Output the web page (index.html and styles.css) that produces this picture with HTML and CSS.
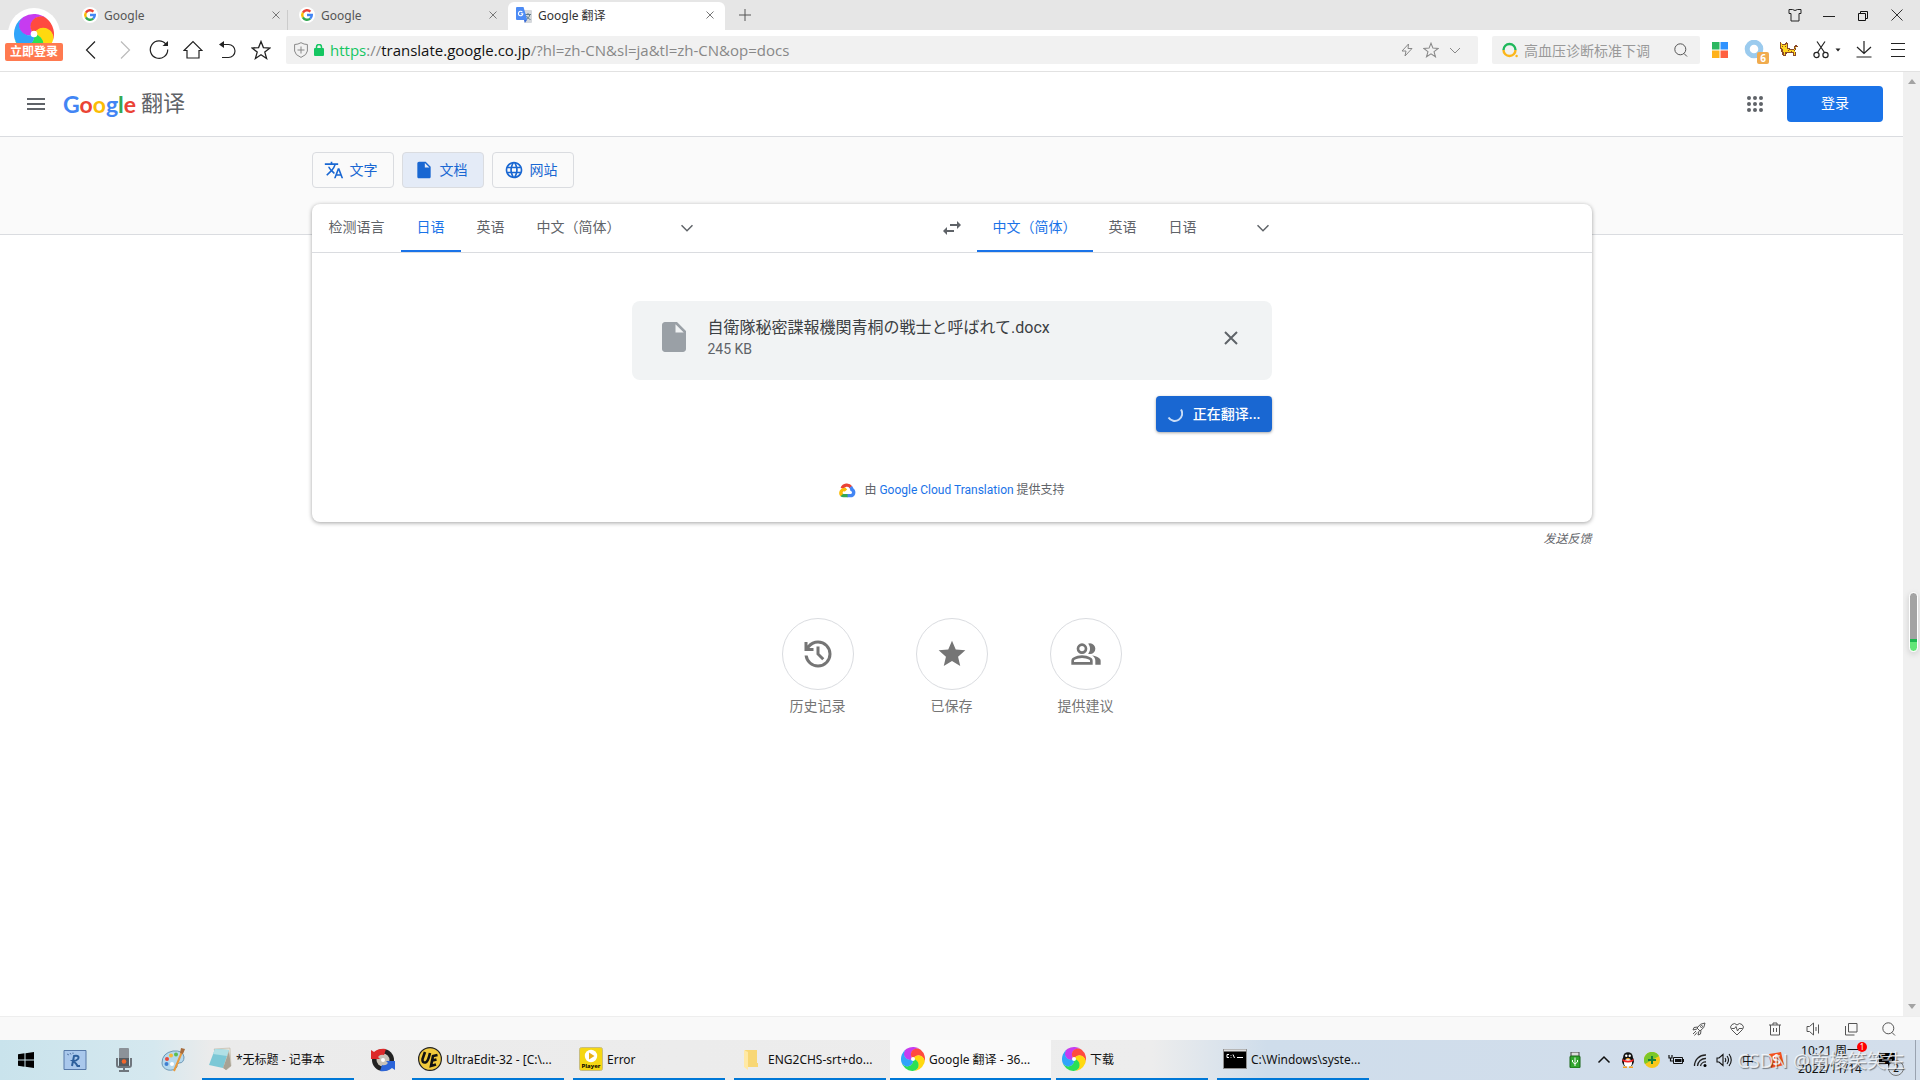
FILE: index.html
```html
<!DOCTYPE html>
<html lang="zh-CN">
  <head>
    <meta charset="UTF-8" />
    <meta name="viewport" content="width=device-width, initial-scale=1.0" />
    <title>Google 翻译</title>
    <link rel="stylesheet" href="styles.css">
  </head>
  <body>
    <!-- Shared icons -->
    <svg class="sprite" aria-hidden="true">
      <symbol id="google-g" viewBox="0 0 16 16">
        <circle cx="8" cy="8" r="8" fill="#fff" />
        <g fill="none" stroke-width="2.4">
          <path d="M3.9 5.6A4.8 4.8 0 0 1 11.4 4.6" stroke="#ea4335" />
          <path d="M3.9 10.4A4.8 4.8 0 0 1 3.9 5.6" stroke="#fbbc05" />
          <path d="M11.2 11.6A4.8 4.8 0 0 1 3.9 10.4" stroke="#34a853" />
          <path d="M8 8H12.8A4.8 4.8 0 0 1 11.2 11.6" stroke="#4285f4" />
        </g>
      </symbol>
      <symbol id="pinwheel" viewBox="0 0 24 24">
        <g transform="rotate(-32 12 12)">
          <path d="M12 12A6 6 0 0 1 12 0A12 12 0 0 1 23.4 8.3A6 6 0 0 0 12 12" fill="#c63cf0" />
          <path d="M12 12A6 6 0 0 1 12 0A12 12 0 0 1 23.4 8.3A6 6 0 0 0 12 12" fill="#ff4a40" transform="rotate(72 12 12)" />
          <path d="M12 12A6 6 0 0 1 12 0A12 12 0 0 1 23.4 8.3A6 6 0 0 0 12 12" fill="#ffd90f" transform="rotate(144 12 12)" />
          <path d="M12 12A6 6 0 0 1 12 0A12 12 0 0 1 23.4 8.3A6 6 0 0 0 12 12" fill="#2be055" transform="rotate(216 12 12)" />
          <path d="M12 12A6 6 0 0 1 12 0A12 12 0 0 1 23.4 8.3A6 6 0 0 0 12 12" fill="#30a4fa" transform="rotate(288 12 12)" />
        </g>
        <circle cx="12" cy="12" r="2" fill="#fff" />
      </symbol>
      <symbol id="close" viewBox="0 0 8 8">
        <path d="M.5 .5L7.5 7.5M7.5 .5L.5 7.5" fill="none" stroke="currentColor" />
      </symbol>
      <symbol id="file" viewBox="0 0 24 24">
        <path d="M6 2c-1.1 0-2 .9-2 2v16c0 1.1.9 2 2 2h12c1.1 0 2-.9 2-2V8l-6-6H6zm7 7V3.5L18.5 9H13z" />
      </symbol>
      <symbol id="chevron" viewBox="0 0 24 24">
        <path d="M5.4 7.6L4 9l8 8 8-8-1.4-1.4L12 14.2z" />
      </symbol>
      <symbol id="star-line" viewBox="0 0 20 20">
        <path d="M10 1.5L12.4 7.6L19 8L13.8 12.1L15.6 18.5L10 14.8L4.4 18.5L6.2 12.1L1 8L7.6 7.6Z" fill="none" stroke="currentColor" stroke-width="1.3" />
      </symbol>
      <symbol id="search" viewBox="0 0 14 14">
        <circle cx="6.3" cy="6.3" r="5.5" fill="none" stroke="currentColor" />
        <path d="M10 10.5L13 13.5" stroke="currentColor" />
      </symbol>
    </svg>

    <!-- Browser tabs -->
    <header class="browser">
      <div class="tab-strip">
        <div class="tab divided">
          <svg class="icon-16"><use href="#google-g" /></svg>
          <span class="tab-title">Google</span>
          <button class="tab-close" aria-label="关闭"><svg class="icon-8"><use href="#close" /></svg></button>
        </div>
        <div class="tab">
          <svg class="icon-16"><use href="#google-g" /></svg>
          <span class="tab-title">Google</span>
          <button class="tab-close" aria-label="关闭"><svg class="icon-8"><use href="#close" /></svg></button>
        </div>
        <div class="tab active">
          <svg class="icon-16" viewBox="0 0 16 16">
            <path d="M6 3H15A1 1 0 0 1 16 4V15A1 1 0 0 1 15 16H9Z" fill="#d5d8dc" />
            <path d="M9 7.5H15M12 6V7.5M10 12.5C12 11.5 13.4 10 13.8 7.5M10.5 9C11.5 11 13 12 14.5 12.5" stroke="#607d8b" fill="none" />
            <path d="M8 13H11L8.8 16Z" fill="#3367d6" />
            <path d="M1 0H7.5L11.3 13H1A1 1 0 0 1 0 12V1A1 1 0 0 1 1 0Z" fill="#4c8bf5" />
            <path d="M6.4 5.2A2.2 2.2 0 1 0 6.8 6.8H4.8" stroke="#fff" stroke-width="1.1" fill="none" />
          </svg>
          <span class="tab-title">Google 翻译</span>
          <button class="tab-close" aria-label="关闭"><svg class="icon-8"><use href="#close" /></svg></button>
        </div>
        <button class="tab-new" aria-label="新标签页">
          <svg class="icon-12" viewBox="0 0 12 12"><path d="M6 0V12M0 6H12" stroke="#555" /></svg>
        </button>
        <div class="window-controls">
          <button aria-label="皮肤"><svg class="icon-14" viewBox="0 0 14 14"><path d="M1 1.5H4.5Q7 3.5 9.5 1.5H13V5.5H11V13H3V5.5H1Z" fill="none" stroke="#222" /></svg></button>
          <button aria-label="最小化"><svg class="icon-14" viewBox="0 0 14 14"><path d="M1 8.5H13" stroke="#222" /></svg></button>
          <button aria-label="还原"><svg class="icon-14" viewBox="0 0 14 14"><path d="M2.5 5.5H9.5V12.5H2.5ZM4.5 5V3.5H11.5V10.5H10" fill="none" stroke="#111" /></svg></button>
          <button aria-label="关闭窗口"><svg class="icon-14" viewBox="0 0 14 14"><path d="M1.5 1.5L12.5 12.5M12.5 1.5L1.5 12.5" stroke="#333" /></svg></button>
        </div>
      </div>

      <button class="account">
        <span class="account-logo"><svg class="icon-40"><use href="#pinwheel" /></svg></span>
        <span class="account-label">立即登录</span>
      </button>

      <!-- Address bar -->
      <div class="toolbar">
        <button class="tool" aria-label="后退"><svg class="icon-20" viewBox="0 0 20 20"><path d="M14 1.5L5.5 10L14 18.5" /></svg></button>
        <button class="tool disabled" aria-label="前进"><svg class="icon-20" viewBox="0 0 20 20"><path d="M6 1.5L14.5 10L6 18.5" /></svg></button>
        <button class="tool" aria-label="刷新"><svg class="icon-20" viewBox="0 0 20 20"><path d="M17 4.5A8.7 8.7 0 1 0 18.7 9.5" /><path d="M19 1V6H13.5Z" fill="#222" stroke="none" /></svg></button>
        <button class="tool" aria-label="主页"><svg class="icon-20" viewBox="0 0 20 20"><path d="M1 10.5L10 1.5L19 10.5H16V18H4V10.5Z" /></svg></button>
        <button class="tool" aria-label="恢复"><svg class="icon-20" viewBox="0 0 20 20"><path d="M4 4.5H11.5A6.5 6.5 0 0 1 11.5 17.5H5" /><path d="M2 4.5L7 1V8Z" fill="#222" stroke="none" /></svg></button>
        <button class="tool" aria-label="收藏"><svg class="icon-20"><use href="#star-line" /></svg></button>
        <div class="address">
          <svg class="shield" viewBox="0 0 14 16"><path d="M7 .7Q10 2.5 13.4 2.5V9Q13 13 7 15.4Q1 13 .6 9V2.5Q4 2.5 7 .7ZM7 4.5V11.5M3.5 8H10.5" fill="none" stroke="#888" /></svg>
          <svg class="lock" viewBox="0 0 10 12"><rect y="4" width="10" height="8" rx="1" fill="#15c662" /><path d="M2.5 5V3A2.5 2.5 0 0 1 7.5 3V5" fill="none" stroke="#15c662" stroke-width="1.5" /></svg>
          <div class="url" role="textbox" aria-label="网址" contenteditable="true" spellcheck="false"><span class="url-scheme">https</span>://<span class="url-host">translate.google.co.jp</span>/?hl=zh-CN&amp;sl=ja&amp;tl=zh-CN&amp;op=docs</div>
          <button aria-label="极速模式"><svg class="icon-14" viewBox="0 0 14 14"><path d="M8.5 1L2 8H6L5 13L12 5.5H8Z" fill="none" stroke="#888" /></svg></button>
          <button aria-label="收藏网页"><svg class="icon-16"><use href="#star-line" /></svg></button>
          <button aria-label="历史"><svg class="icon-12" viewBox="0 0 12 12"><path d="M1 4L6 9L11 4" fill="none" stroke="#888" /></svg></button>
        </div>
        <form class="quick-search">
          <svg class="icon-16" viewBox="0 0 16 16"><path d="M1.5 8A6 6 0 0 1 13.5 8" fill="none" stroke="#1fb85b" stroke-width="2.4" /><path d="M13.5 8A6 6 0 0 1 1.5 8" fill="none" stroke="#fbb61a" stroke-width="2.4" /><circle cx="14.6" cy="14" r="1.2" fill="#fbb61a" /></svg>
          <input type="text" aria-label="搜索" placeholder="高血压诊断标准下调" />
          <button type="submit" aria-label="搜索"><svg class="icon-14"><use href="#search" /></svg></button>
        </form>
        <button class="tool colored" aria-label="应用"><svg class="icon-16" viewBox="0 0 16 16"><path d="M0 0H7.5V7.5H0Z" fill="#2cb760" /><path d="M8.5 0H16V7.5H8.5Z" fill="#2f93ff" /><path d="M0 8.5H7.5V16H0Z" fill="#ffb21a" /><path d="M8.5 8.5H16V16H8.5Z" fill="#ff6040" /></svg></button>
        <button class="tool" aria-label="扩展">
          <svg class="icon-20" viewBox="0 0 20 20"><circle cx="10" cy="9" r="6.8" stroke="#9bcbee" stroke-width="5" /></svg>
          <span class="tool-badge">6</span>
        </button>
        <button class="tool colored" aria-label="猎豹"><svg class="icon-20" viewBox="0 0 20 20"><path d="M2 2H3V3H4V4H7V3H8V2H9V3H10V8H12V9H16V6H17V5H19V6H20V7H18V10H17V12H18V16H15V13H9V14H8V16H5V15H4V12H3V9H2Z" fill="#8a4a2a" /><path d="M3 3V8H4V9H5V12H6V15H7V12H16V15H17V11H16V10H11V9H9V4H8V5H4V3ZM17 7V9H16V10H17V8H18V7Z" fill="#ffd51f" /><path d="M4 6H5V7H4ZM7 6H8V7H7ZM10 10H11V11H10ZM13 11H14V12H13Z" fill="#8a4a2a" /></svg></button>
        <button class="tool wide" aria-label="截图">
          <svg class="icon-20" viewBox="0 0 20 20"><circle cx="5.5" cy="15" r="2.6" /><circle cx="14.5" cy="15" r="2.6" /><path d="M6.5 12.5L14 1.5M13.5 12.5L6 1.5" /></svg>
          <svg class="caret" viewBox="0 0 6 4"><path d="M.5 .5H5.5L3 3.5Z" fill="#222" stroke="none" /></svg>
        </button>
        <button class="tool" aria-label="下载"><svg class="icon-20" viewBox="0 0 20 20"><path d="M10 1V13.5M3 7L10 13.5L17 7M2.5 17H17.5" /></svg></button>
        <button class="tool" aria-label="菜单"><svg class="icon-20" viewBox="0 0 20 20"><path d="M3 3.5H17M3 9.5H17M3 16.5H17" /></svg></button>
      </div>
    </header>

    <div class="viewport">
      <main class="page">
        <div class="topbar">
          <button class="menu" aria-label="主菜单"><svg class="icon-24" viewBox="0 0 24 24"><path d="M3 18h18v-2H3zM3 13h18v-2H3zM3 8h18V6H3z" /></svg></button>
          <a class="brand" href="#">
            <span class="logo"><span class="blue">G</span><span class="red">o</span><span class="yellow">o</span><span class="blue">g</span><span class="green">l</span><span class="red">e</span></span>
            <span class="brand-name">翻译</span>
          </a>
          <button class="apps" aria-label="Google 应用">
            <svg class="icon-24" viewBox="0 0 24 24">
              <circle cx="6" cy="6" r="2" /><circle cx="12" cy="6" r="2" /><circle cx="18" cy="6" r="2" />
              <circle cx="6" cy="12" r="2" /><circle cx="12" cy="12" r="2" /><circle cx="18" cy="12" r="2" />
              <circle cx="6" cy="18" r="2" /><circle cx="12" cy="18" r="2" /><circle cx="18" cy="18" r="2" />
            </svg>
          </button>
          <button class="sign-in">登录</button>
        </div>

        <div class="band">
          <nav class="modes">
            <button class="mode">
              <svg class="icon-20" viewBox="0 0 24 24"><path d="M12.87 15.07l-2.54-2.51.03-.03A17.52 17.52 0 0014.07 6H17V4h-7V2H8v2H1v1.99h11.17C11.5 7.92 10.44 9.75 9 11.35 8.07 10.32 7.3 9.19 6.69 8h-2c.73 1.63 1.73 3.17 2.98 4.56l-5.09 5.02L4 19l5-5 3.11 3.11.76-2.04zM18.5 10h-2L12 22h2l1.12-3h4.75L21 22h2l-4.5-12zm-2.62 7l1.62-4.33L19.12 17h-3.24z" /></svg>
              文字
            </button>
            <button class="mode selected"><svg class="icon-20"><use href="#file" /></svg>文档</button>
            <button class="mode">
              <svg class="icon-20" viewBox="0 0 24 24"><path d="M11.99 2C6.47 2 2 6.48 2 12s4.47 10 9.99 10C17.52 22 22 17.52 22 12S17.52 2 11.99 2zm6.93 6h-2.95a15.65 15.65 0 00-1.38-3.56A8.03 8.03 0 0118.92 8zM12 4.04c.83 1.2 1.48 2.53 1.91 3.96h-3.82c.43-1.43 1.08-2.76 1.91-3.96zM4.26 14C4.1 13.36 4 12.69 4 12s.1-1.36.26-2h3.38c-.08.66-.14 1.32-.14 2s.06 1.34.14 2H4.26zm.82 2h2.95c.32 1.25.78 2.45 1.38 3.56A7.987 7.987 0 015.08 16zm2.95-8H5.08a7.987 7.987 0 014.33-3.56A15.65 15.65 0 008.03 8zM12 19.96c-.83-1.2-1.48-2.53-1.91-3.96h3.82c-.43 1.43-1.08 2.76-1.91 3.96zM14.34 14H9.66c-.09-.66-.16-1.32-.16-2s.07-1.35.16-2h4.68c.09.65.16 1.32.16 2s-.07 1.34-.16 2zm.25 5.56c.6-1.11 1.06-2.31 1.38-3.56h2.95a8.03 8.03 0 01-4.33 3.56zM16.36 14c.08-.66.14-1.32.14-2s-.06-1.34-.14-2h3.38c.16.64.26 1.31.26 2s-.1 1.36-.26 2h-3.38z" /></svg>
              网站
            </button>
          </nav>
        </div>

        <div class="content">
          <section class="card">
            <div class="languages">
              <div class="lang-group">
                <button class="lang">检测语言</button>
                <button class="lang current">日语</button>
                <button class="lang">英语</button>
                <button class="lang">中文（简体）</button>
                <button class="lang-more" aria-label="更多源语言"><svg class="icon-18"><use href="#chevron" /></svg></button>
              </div>
              <button class="swap" aria-label="交换语言"><svg class="icon-24" viewBox="0 0 24 24"><path d="M7 11L3 15l4 4v-3H14v-2H7v-3zM21 9l-4-4v3H10v2h7v3L21 9z" /></svg></button>
              <div class="lang-group">
                <button class="lang current">中文（简体）</button>
                <button class="lang">英语</button>
                <button class="lang">日语</button>
                <button class="lang-more" aria-label="更多目标语言"><svg class="icon-18"><use href="#chevron" /></svg></button>
              </div>
            </div>

            <div class="upload">
              <div class="file">
                <svg class="icon-36"><use href="#file" /></svg>
                <div class="file-info">
                  <div class="file-name" lang="ja">自衛隊秘密諜報機関青桐の戦士と呼ばれて.docx</div>
                  <div class="file-size">245 KB</div>
                </div>
                <button class="file-remove" aria-label="移除文件"><svg class="icon-14" viewBox="0 0 14 14"><path d="M1 1L13 13M13 1L1 13" stroke="currentColor" stroke-width="2" /></svg></button>
              </div>
              <button class="translate">
                <svg class="icon-16" viewBox="0 0 16 16"><path d="M14 3.5A7 7 0 0 1 1.5 11.5" fill="none" stroke="#c9dcf6" stroke-width="2" /></svg>
                正在翻译...
              </button>
              <div class="powered">
                <svg class="icon-18" viewBox="0 0 16 16" fill="none" stroke-width="3">
                  <path d="M3.7 6.5A4.5 4.5 0 0 1 11.5 5.5" stroke="#ea4335" />
                  <path d="M11.3 5.3Q12.3 6.5 12.3 7.5A3 3 0 0 1 12 13H8" stroke="#4285f4" />
                  <path d="M8.5 13H5Q3.8 13 3 12.2" stroke="#34a853" />
                  <path d="M3.3 12.6A3.2 3.2 0 0 1 6 7.4L7 8.5" stroke="#fbbc05" />
                </svg>
                <span>由 <a href="#">Google Cloud Translation</a> 提供支持</span>
              </div>
            </div>
          </section>

          <a class="feedback" href="#">发送反馈</a>

          <div class="shortcuts">
            <button class="shortcut">
              <span class="shortcut-icon"><svg class="icon-36" viewBox="0 -960 960 960"><path d="M480-120q-138 0-240.5-91.5T122-440h82q14 104 92.5 172T480-200q117 0 198.5-81.5T760-480q0-117-81.5-198.5T480-760q-69 0-129 32t-101 88h110v80H120v-240h80v94q51-64 124.5-99T480-840q75 0 140.5 28.5t114 77q48.5 48.5 77 114T840-480q0 75-28.5 140.5t-77 114q-48.5 48.5-114 77T480-120Zm112-192L440-464v-216h80v184l128 128-56 56Z" /></svg></span>
              历史记录
            </button>
            <button class="shortcut">
              <span class="shortcut-icon"><svg class="icon-32" viewBox="0 0 24 24"><path d="M12 17.27L18.18 21l-1.64-7.03L22 9.24l-7.19-.61L12 2 9.19 8.63 2 9.24l5.46 4.73L5.82 21z" /></svg></span>
              已保存
            </button>
            <button class="shortcut">
              <span class="shortcut-icon"><svg class="icon-32" viewBox="0 -960 960 960"><path d="M40-160v-112q0-34 17.5-62.5T104-378q62-31 126-46.5T360-440q66 0 130 15.5T616-378q29 15 46.5 43.5T680-272v112H40Zm720 0v-120q0-44-24.5-84.5T666-434q51 6 96 20.5t84 35.5q36 20 55 44.5t19 53.5v120H760ZM360-480q-66 0-113-47t-47-113q0-66 47-113t113-47q66 0 113 47t47 113q0 66-47 113t-113 47Zm400-160q0 66-47 113t-113 47q-11 0-28-2.5t-28-5.5q27-32 41.5-71t14.5-81q0-42-14.5-81T544-792q14-5 28-6.5t28-1.5q66 0 113 47t47 113ZM120-240h480v-32q0-11-5.5-20T580-306q-54-27-109-40.5T360-360q-56 0-111 13.5T140-306q-9 5-14.5 14t-5.5 20v32Zm240-320q33 0 56.5-23.5T440-640q0-33-23.5-56.5T360-720q-33 0-56.5 23.5T280-640q0 33 23.5 56.5T360-560Z" /></svg></span>
              提供建议
            </button>
          </div>
        </div>
      </main>

      <div class="scrollbar">
        <svg class="scroll-arrow" viewBox="0 0 8 5"><path d="M4 0L8 5H0Z" /></svg>
        <div class="scroll-meter"></div>
        <svg class="scroll-arrow" viewBox="0 0 8 5"><path d="M4 5L8 0H0Z" /></svg>
      </div>
    </div>

    <!-- Browser status bar -->
    <div class="statusbar">
      <button aria-label="加速"><svg class="icon-14" viewBox="0 0 14 14"><path d="M13 1Q8 1 5 6L8 9Q13 6 13 1ZM5.5 5L2 5.5L1 8L5 7M9 8.5L8.5 12L6 13L7 9M4 9L1 12M5 10.5L2.5 13.5" /><circle cx="9.5" cy="4.5" r="1" /></svg></button>
      <button aria-label="医生"><svg class="icon-14" viewBox="0 0 14 14"><path d="M7 13L1.5 7.5A3.5 3.5 0 0 1 7 3A3.5 3.5 0 0 1 12.5 7.5ZM1.5 6.5H4.5L6 4.5L7.5 9L9 6.5H12.5" /></svg></button>
      <button aria-label="清理"><svg class="icon-14" viewBox="0 0 14 14"><path d="M1 3H13M5 3V1H9V3M2.5 3V13H11.5V3M5.5 6V10M8.5 6V10" /></svg></button>
      <button aria-label="声音"><svg class="icon-14" viewBox="0 0 14 14"><path d="M1 4.5H3.5L7.5 1V13L3.5 9.5H1ZM10 5V9M12.5 2.5V11.5" /></svg></button>
      <button aria-label="分屏"><svg class="icon-14" viewBox="0 0 14 14"><path d="M4.5 1.5H13V10H4.5ZM1.5 4V13H10.5" /></svg></button>
      <button aria-label="查找"><svg class="icon-14"><use href="#search" /></svg></button>
    </div>

    <!-- Windows taskbar -->
    <footer class="taskbar">
      <button class="pinned" aria-label="开始"><svg class="icon-16" viewBox="0 0 16 16"><path d="M0 2.2L6.5 1.3V7.5H0ZM7.5 1.2L16 0V7.5H7.5ZM0 8.5H6.5V14.7L0 13.8ZM7.5 8.5H16V16L7.5 14.8Z" /></svg></button>
      <button class="pinned" aria-label="运行"><svg class="icon-24" viewBox="0 0 24 24"><path d="M1 2.5H23V21.5H1Z" fill="#a9c8ec" stroke="#5679a8" /><path d="M9 18L11 8Q17 7 15 11Q13.5 13 10 13Q13 15 14.5 18H17" fill="none" stroke="#2d5f9c" stroke-width="2" /><path d="M4 6L6 7M7 5L8 6.5M10 4.5V6" stroke="#5679a8" /></svg></button>
      <button class="pinned" aria-label="录音机"><svg class="icon-24" viewBox="0 0 24 24"><rect x="7" width="10" height="17" rx="1" fill="#8c9299" /><path d="M5 10V17Q5 19 7 19H17Q19 19 19 17V10" fill="none" stroke="#6f767d" stroke-width="2" /><path d="M7 10H17V18H7Z" fill="#555b61" /><circle cx="12" cy="13.5" r="2.3" fill="#f2662b" /><path d="M11 19H13V22H17V24H7V22H11Z" fill="#6f767d" /></svg></button>
      <button class="pinned" aria-label="画图"><svg class="icon-24" viewBox="0 0 24 24"><path d="M1 15Q1 5 12 3Q22 2 23 9Q23 15 18 15Q15 16 16 19Q13 23 7 22Q1 20 1 15Z" fill="#b5d9ee" stroke="#6c97b5" /><circle cx="6" cy="11" r="2" fill="#e8483c" /><circle cx="10" cy="7.5" r="2" fill="#f6b93b" /><circle cx="15" cy="6.5" r="2" fill="#5bbd50" /><circle cx="5.5" cy="16" r="2" fill="#3f7fd0" /><circle cx="11" cy="16" r="2" fill="#fff" /><path d="M21 4L13 23" stroke="#e89a3e" stroke-width="2" /><path d="M19 5L20 0L24 1L22 6Z" fill="#a86c3c" /></svg></button>
      <button class="task"><span class="task-body"><svg class="icon-24" viewBox="0 0 24 24"><path d="M6 2L22 1L23 19L18 23L16 20Z" fill="#e8e4d8" stroke="#b3ab98" stroke-width=".5" /><path d="M7 2L21 3L15 21L1 18Z" fill="#7cc8d6" /><path d="M7 2L21 3L19 9L5 7Z" fill="#b0e0e6" /><path d="M21 4L15 21L18 23L23 19Z" fill="#a8a294" /></svg>*无标题 - 记事本</span></button>
      <button class="pinned" aria-label="播放器"><svg class="icon-24" viewBox="0 0 24 24"><circle cx="12" cy="12" r="11" fill="#222" /><circle cx="12" cy="12" r="6.5" fill="#c9c3b8" /><circle cx="12" cy="12" r="2" fill="#fff" /><path d="M0 2L3 4Q8 0 15 1L13 7Q9 6 7 9L9 11L0 11Z" fill="#dd2a2a" /><path d="M24 22L21 20Q16 24 9 23L11 17Q15 18 17 15L15 13L24 13Z" fill="#2c65d9" /></svg></button>
      <button class="task"><span class="task-body"><svg class="icon-24" viewBox="0 0 24 24"><circle cx="12" cy="12" r="11.4" fill="#f0c93c" stroke="#222" stroke-width="1.2" /><path d="M7 5L4.5 12Q4 16 7.5 15.5Q10 15 12 6M19.5 8L15 9L13 19L18 17.5M14.5 13.5L18.5 12.5" fill="none" stroke="#111" stroke-width="2.6" /></svg>UltraEdit-32 - [C:\...</span></button>
      <button class="task"><span class="task-body"><svg class="icon-24" viewBox="0 0 24 24"><rect x=".5" y=".5" width="23" height="23" rx="2" fill="#f5d713" stroke="#c8bd80" /><circle cx="12" cy="9" r="6.2" fill="#fff" /><path d="M10 5.5L15.5 9L10 12.5Z" fill="#e8ae17" /><text x="12" y="21" class="player-label">Player</text></svg>Error</span></button>
      <button class="task"><span class="task-body folder-task"><svg class="icon-24" viewBox="0 0 24 24"><path d="M5 3H17V16H18V20H5Z" fill="#f8d775" /><path d="M4 3L8 5V23L4 20Z" fill="#ffe9a6" /></svg>ENG2CHS-srt+do...</span></button>
      <button class="task active"><span class="task-body"><svg class="icon-24"><use href="#pinwheel" /></svg>Google 翻译 - 36...</span></button>
      <button class="task"><span class="task-body"><svg class="icon-24"><use href="#pinwheel" /></svg>下载</span></button>
      <button class="task"><span class="task-body"><svg class="icon-24" viewBox="0 0 24 24"><rect x=".5" y="2.5" width="23" height="19" fill="#000" stroke="#8f8f8f" /><path d="M1 3.5H23" stroke="#ddd" stroke-width="2" /><path d="M6 7.5H4V10.5H6M8 8V8.7M8 10V10.7M10 7.5L11.5 11M14 10.5H20" fill="none" stroke="#fff" /></svg>C:\Windows\syste...</span></button>

      <div class="tray">
        <button class="tray-item usb" aria-label="USB"><svg class="icon-16" viewBox="0 0 16 16"><rect x="4" width="8" height="5" fill="#ddd" stroke="#444" /><rect x="3" y="4" width="10" height="12" rx="1" fill="#31a62d" stroke="#186416" /><path d="M8 5.5V14M5.5 8V10L8 12L10.5 10V8" stroke="#fff" fill="none" /></svg></button>
        <button class="tray-item" aria-label="显示隐藏的图标"><svg class="icon-16" viewBox="0 0 16 16"><path d="M2.5 10.5L8 5L13.5 10.5" fill="none" stroke="#111" stroke-width="1.5" /></svg></button>
        <button class="tray-item" aria-label="QQ"><svg class="icon-16" viewBox="0 0 16 16"><ellipse cx="8" cy="9" rx="6" ry="6" fill="#111" /><circle cx="8" cy="5" r="4.8" fill="#111" /><ellipse cx="8" cy="11" rx="4" ry="4" fill="#fff" /><path d="M2.5 7Q8 10.5 13.5 7V9Q8 12 2.5 9Z" fill="#e22" /><circle cx="6.3" cy="3.8" r="1.2" fill="#fff" /><circle cx="9.7" cy="3.8" r="1.2" fill="#fff" /><path d="M5.5 6H10.5L8 7.5ZM3 14.5H7V16H3ZM9 14.5H13V16H9Z" fill="#f9a11b" /></svg></button>
        <button class="tray-item" aria-label="安全卫士"><svg class="icon-16" viewBox="0 0 16 16"><circle cx="8" cy="8" r="8" fill="#f8c81c" /><path d="M1 4A8 8 0 0 1 15 4Q8 8 1 12A8 8 0 0 1 1 4Z" fill="#7cc829" /><path d="M8 4V12M4 8H12" stroke="#15803a" stroke-width="2" /></svg></button>
        <button class="tray-item" aria-label="电池"><svg class="icon-16" viewBox="0 0 16 16"><path d="M1 3V6H4V3M2.5 6V9H5" fill="none" stroke="#111" stroke-width="1.2" /><path d="M5.5 5.5H14.5V11.5H5.500Z" fill="none" stroke="#111" /><path d="M7 7H13.500V10H7ZM15 7H16V10H15Z" fill="#111" /></svg></button>
        <button class="tray-item" aria-label="网络"><svg class="icon-16" viewBox="0 0 16 16"><path d="M2.5 14A11 11 0 0 1 14 3M5.5 14A8 8 0 0 1 14 6.5M8.5 14A5 5 0 0 1 14 10" fill="none" stroke="#222" stroke-width="1.3" /><circle cx="13" cy="13.5" r="1.5" /></svg></button>
        <button class="tray-item" aria-label="音量"><svg class="icon-16" viewBox="0 0 16 16"><path d="M1 6H3L7 2.5V13.5L3 10H1ZM9 6Q10.5 8 9 10M11 4Q14 8 11 12M13 2Q17.5 8 13 14" fill="none" stroke="#111" stroke-width="1.1" /></svg></button>
        <button class="tray-item ime">中</button>
        <button class="tray-item sogou" aria-label="搜狗"><svg class="icon-16" viewBox="0 0 16 16"><path d="M1 2L13 0L16 13L3 16Z" fill="#f4511e" /><path d="M11.5 4Q5 3 5 6Q5 8 8.5 8Q12 8.5 11 11Q9 13 5 11.5" fill="none" stroke="#fff" stroke-width="1.8" /></svg></button>
        <div class="clock">
          <div>10:21 周一</div>
          <div>2022/11/14</div>
          <span class="clock-badge">1</span>
        </div>
        <button class="notice" aria-label="通知">
          <svg class="icon-16" viewBox="0 0 16 16"><path d="M0 1H16V12H12L9 15V12H0Z" /><path d="M3 4.5H13M3 8H13" stroke="#ccd6e6" /></svg>
          <span class="notice-count">2</span>
        </button>
      </div>
      <div class="watermark">CSDN @南棱笑笑生</div>
    </footer>
  </body>
</html>
```

FILE: styles.css
```css
* {
  box-sizing: border-box;
}

body {
  margin: 0;
  height: 100vh;
  display: flex;
  flex-direction: column;
  overflow: hidden;
  background-color: #fff;
  color: #222;
  font-family: "Noto Sans", "Noto Sans CJK SC", sans-serif;
  font-size: 12px;
}

button {
  padding: 0;
  border: none;
  background-color: transparent;
  color: inherit;
  font: inherit;
  cursor: pointer;
}

a {
  text-decoration: none;
}

svg {
  display: block;
  flex-shrink: 0;
}

.sprite {
  position: absolute;
  width: 0;
  height: 0;
}

/* Icon sizes */
.icon-8 { width: 8px; height: 8px; }
.icon-12 { width: 12px; height: 12px; }
.icon-14 { width: 14px; height: 14px; }
.icon-16 { width: 16px; height: 16px; }
.icon-18 { width: 18px; height: 18px; }
.icon-20 { width: 20px; height: 20px; }
.icon-24 { width: 24px; height: 24px; }
.icon-32 { width: 32px; height: 32px; }
.icon-36 { width: 36px; height: 36px; }
.icon-40 { width: 40px; height: 40px; }

/* Tab strip */
.browser {
  position: relative;
  flex-shrink: 0;
  border-bottom: 1px solid #e2e2e2;
}

.tab-strip {
  display: flex;
  align-items: flex-end;
  height: 30px;
  padding-left: 74px;
  background-color: #e6e6e6;
}

.tab {
  position: relative;
  display: flex;
  align-items: center;
  width: 217px;
  height: 28px;
  padding: 0 11px 2px 8px;
  color: #555;
}

.tab.divided::after {
  content: "";
  position: absolute;
  right: 3px;
  top: 8px;
  width: 1px;
  height: 20px;
  background-color: #ccc;
}

.tab.active {
  background-color: #fff;
  border-radius: 6px 6px 0 0;
  color: #333;
}

.tab-title {
  flex: 1;
  margin-left: 6px;
}

.tab-close {
  color: #777;
}

.tab-new {
  width: 40px;
  height: 28px;
  padding: 0 14px 2px;
}

.window-controls {
  display: flex;
  height: 30px;
  margin-left: auto;
  padding-right: 6px;
}

.window-controls button {
  width: 34px;
  padding: 0 10px;
}

.account {
  position: absolute;
  left: 5px;
  top: 6px;
  width: 58px;
  height: 55px;
}

.account-logo {
  display: block;
  width: 52px;
  height: 52px;
  margin: 0 auto;
  padding: 6px;
  border-radius: 50%;
  background-color: #fff;
}

.account-label {
  position: absolute;
  left: 0;
  bottom: 0;
  width: 58px;
  border-radius: 2px;
  background-color: #ff7a50;
  color: #fff;
  font-weight: bold;
  line-height: 18px;
}

/* Toolbar */
.toolbar {
  display: flex;
  align-items: center;
  height: 41px;
  padding: 0 5px 1px 74px;
}

.tool {
  position: relative;
  display: flex;
  align-items: center;
  justify-content: center;
  width: 34px;
  height: 28px;
  color: #222;
}

.tool svg {
  fill: none;
  stroke: #222;
  stroke-width: 1.2;
}

.tool.disabled svg {
  stroke: #bbb;
}

.tool.colored svg {
  stroke: none;
}

.tool.wide {
  width: 42px;
  gap: 4px;
}

.tool .caret {
  width: 6px;
  height: 4px;
}

.tool-badge {
  position: absolute;
  right: 2px;
  bottom: 0;
  width: 12px;
  border-radius: 2px;
  background-color: #f0ab4e;
  color: #fff;
  font-size: 10px;
  font-weight: bold;
  line-height: 12px;
}

.address,
.quick-search {
  display: flex;
  align-items: center;
  height: 28px;
  border-radius: 2px;
  background-color: #f1f1f1;
}

.address {
  flex: 1;
  margin: 0 14px 0 8px;
  padding: 0 11px 0 8px;
}

.shield {
  width: 14px;
  height: 16px;
}

.lock {
  width: 10px;
  height: 12px;
  margin: 0 6px;
}

.url {
  flex: 1;
  color: #888;
  font-family: "Open Sans", sans-serif;
  font-size: 15px;
  line-height: 20px;
  white-space: nowrap;
}

.url-scheme {
  color: #15c662;
}

.url-host {
  color: #111;
}

.address button {
  display: flex;
  align-items: center;
  justify-content: center;
  width: 24px;
  color: #888;
}

.quick-search {
  width: 208px;
  margin-right: 3px;
  padding: 0 12px 0 10px;
}

.quick-search input {
  flex: 1;
  min-width: 0;
  margin-left: 6px;
  padding: 0;
  border: none;
  outline: none;
  background-color: transparent;
  font: inherit;
  font-size: 14px;
}

.quick-search input::placeholder {
  color: #999;
}

.quick-search button {
  color: #555;
}

/* Page */
.viewport {
  display: flex;
  flex: 1;
  min-height: 0;
}

.page {
  flex: 1;
  min-width: 0;
  color: #5f6368;
  font-family: Roboto, "Noto Sans CJK SC", sans-serif;
  font-size: 14px;
  line-height: 20px;
}

.topbar {
  display: flex;
  align-items: center;
  height: 65px;
  padding: 0 20px 0 24px;
  border-bottom: 1px solid #dadce0;
}

.topbar svg,
.lang-more svg,
.swap svg {
  fill: #5f6368;
}

.brand {
  display: flex;
  align-items: center;
  gap: 5px;
  margin-left: 15px;
  color: #5f6368;
  font-size: 22px;
  line-height: 28px;
}

.logo {
  font-family: Lato, sans-serif;
  font-size: 23px;
  font-weight: bold;
}

.blue { color: #4285f4; }
.red { color: #ea4335; }
.yellow { color: #fbbc05; }
.green { color: #34a853; }

.apps {
  margin: 0 20px 0 auto;
}

.sign-in {
  width: 96px;
  height: 36px;
  padding-bottom: 2px;
  border-radius: 4px;
  background-color: #1a73e8;
  color: #fff;
}

.band {
  height: 98px;
  border-bottom: 1px solid #dadce0;
  background-color: #fafafa;
}

.modes {
  display: flex;
  gap: 8px;
  max-width: 1280px;
  margin: 0 auto;
  padding-top: 15px;
}

.mode {
  display: flex;
  align-items: center;
  gap: 6px;
  height: 36px;
  padding: 0 15px 0 11px;
  border: 1px solid #dadce0;
  border-radius: 4px;
  color: #1967d2;
}

.mode svg {
  fill: #1967d2;
}

.mode.selected {
  background-color: #e4ebf7;
}

/* Card covers the lower edge of the grey band */
.content {
  position: relative;
  max-width: 1280px;
  margin: -31px auto 0;
}

.card {
  border-radius: 8px;
  background-color: #fff;
  box-shadow: 0 1px 4px rgba(0, 0, 0, 0.37);
}

.languages {
  display: grid;
  grid-template-columns: 1fr 48px 1fr;
  height: 49px;
  border-bottom: 1px solid #dadce0;
}

.lang-group {
  display: flex;
  padding-left: 1px;
}

.lang {
  padding: 0 16px;
  border-bottom: 2px solid transparent;
  white-space: nowrap;
}

.lang.current {
  border-bottom-color: #1a73e8;
  color: #1a73e8;
}

.lang-more {
  display: flex;
  align-items: center;
  justify-content: center;
  width: 48px;
  margin-left: 26px;
}

.swap {
  padding: 0 12px;
}

.upload {
  display: flex;
  flex-direction: column;
  width: 50%;
  margin: 0 auto;
  padding: 48px 0 22px;
}

.file {
  display: flex;
  height: 79px;
  padding: 18px 32px 0 24px;
  border-radius: 8px;
  background-color: #f1f3f4;
}

.file > svg {
  fill: #9aa0a6;
}

.file-info {
  flex: 1;
  margin: -1px 0 0 16px;
}

.file-name {
  color: #3c4043;
  font-family: Roboto, "Noto Sans CJK JP", sans-serif;
  font-size: 16px;
}

.file-size {
  line-height: 22px;
}

.file-remove {
  width: 16px;
  height: 38px;
}

.translate {
  display: flex;
  align-items: center;
  align-self: flex-end;
  gap: 10px;
  height: 36px;
  margin-top: 16px;
  padding: 0 11px;
  border-radius: 4px;
  background-color: #1967d2;
  box-shadow: 0 1px 3px rgba(0, 0, 0, 0.35);
  color: #fff;
  font-weight: 500;
}

.powered {
  display: flex;
  align-items: center;
  justify-content: center;
  gap: 8px;
  margin-top: 48px;
  font-size: 12px;
}

.powered a {
  color: #1a73e8;
}

.feedback {
  display: block;
  margin-top: 7px;
  color: #5f6368;
  font-size: 12px;
  font-style: italic;
  text-align: right;
}

.shortcuts {
  display: flex;
  justify-content: center;
  gap: 62px;
  margin-top: 69px;
}

.shortcut {
  width: 72px;
  color: #757575;
}

.shortcut-icon {
  display: flex;
  align-items: center;
  justify-content: center;
  height: 72px;
  margin-bottom: 6px;
  border: 1px solid #dadce0;
  border-radius: 50%;
}

.shortcut svg {
  fill: #757575;
}

/* Scrollbar */
.scrollbar {
  display: flex;
  flex-direction: column;
  align-items: center;
  justify-content: space-between;
  width: 17px;
  padding: 7px 0;
  background-color: #f0f0f0;
}

.scroll-arrow {
  width: 8px;
  height: 5px;
  fill: #a3a3a3;
}

.scroll-meter {
  width: 9px;
  height: 60px;
  margin: 156px 0 0 4px;
  border: 1px solid #fff;
  border-radius: 5px;
  background: linear-gradient(#a3a3a3 80%, #1cb84f 80%, #1cb84f 84%, #63e678 84%);
  box-shadow: 0 2px 6px rgba(0, 0, 0, 0.15);
}

/* Status bar */
.statusbar {
  display: flex;
  align-items: center;
  justify-content: flex-end;
  height: 24px;
  padding-right: 12px;
  border-top: 1px solid #eee;
  background-color: #f9f9f9;
}

.statusbar button {
  width: 38px;
  padding: 0 12px;
  color: #555;
}

.statusbar svg {
  fill: none;
  stroke: #555;
}

/* Taskbar */
.taskbar {
  position: relative;
  display: flex;
  flex-shrink: 0;
  height: 40px;
  padding-left: 1px;
  background: linear-gradient(90deg, #c9e3ec, #d5e8ef 8%, #ebebeb 11%, #ededed 60%, #cfddeb 66%, #d3deeb);
  color: #111;
}

.pinned {
  display: flex;
  align-items: center;
  justify-content: center;
  width: 49px;
}

.task {
  width: 161px;
  padding: 0 4px 0 5px;
  text-align: left;
}

.task-body {
  display: flex;
  align-items: center;
  gap: 4px;
  height: 40px;
  padding-left: 6px;
  border-bottom: 2px solid #0078d7;
  white-space: nowrap;
}

.task.active {
  padding: 0;
}

.task.active .task-body {
  padding-left: 11px;
  background-color: #fafafa;
}

.task-body.folder-task {
  gap: 4px;
}

.player-label {
  font-size: 6px;
  font-weight: bold;
  text-anchor: middle;
}

.tray {
  display: flex;
  margin-left: auto;
  margin-right: 4px;
  padding-right: 9px;
  border-right: 1px solid #9aa3b0;
}

.tray-item {
  display: flex;
  align-items: center;
  justify-content: center;
  width: 24px;
}

.tray-item.usb {
  margin-right: 5px;
}

.tray-item.sogou {
  width: 32px;
}

.clock {
  position: relative;
  width: 76px;
  padding-top: 2px;
  line-height: 18px;
  text-align: center;
}

.clock-badge {
  position: absolute;
  right: 1px;
  top: 2px;
  width: 10px;
  border-radius: 50%;
  background-color: #f00;
  color: #fff;
  font-size: 8px;
  line-height: 10px;
}

.notice {
  position: relative;
  width: 38px;
  padding-left: 11px;
}

.notice-count {
  position: absolute;
  right: 2px;
  bottom: 4px;
  width: 16px;
  border: 1px solid #777;
  border-radius: 50%;
  background-color: #d3deeb;
  font-size: 10px;
  line-height: 14px;
}

.watermark {
  position: absolute;
  right: 15px;
  bottom: 6px;
  color: rgba(255, 255, 255, 0.75);
  font-size: 19px;
  line-height: 26px;
  text-shadow: 1px 1px 1px rgba(0, 0, 0, 0.45);
  pointer-events: none;
}
```
